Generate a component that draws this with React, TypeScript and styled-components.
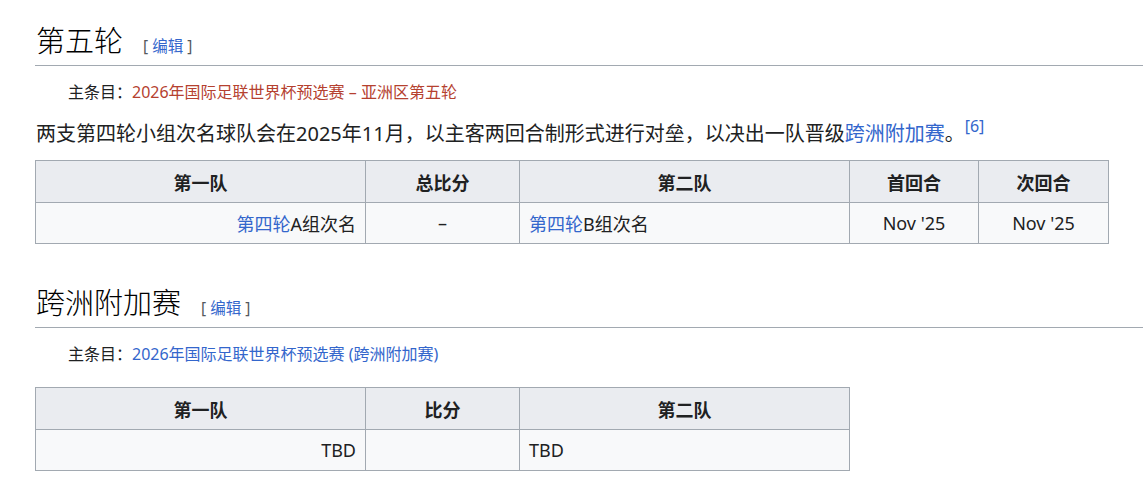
import React from "react";
import styled, { createGlobalStyle } from "styled-components";

const GlobalStyle = createGlobalStyle`
  body {
    margin: 0;
    background: #ffffff;
    color: #202122;
    font-family: "Noto Sans", "Noto Sans CJK SC", sans-serif;
  }
`;

const Page = styled.div`
  padding: 20px 0 0 35px;
`;

const Section = styled.section<{ $gap?: number }>`
  margin-top: ${(p) => p.$gap ?? 0}px;
`;

const Heading = styled.h2`
  display: block;
  margin: 0;
  padding: 0 0 7px 1px;
  border-bottom: 1px solid #a2a9b1;
  font-family: "Noto Sans CJK SC", sans-serif;
  font-weight: 300;
  font-size: 29px;
  line-height: 38px;
  color: #000000;
`;

const EditLinks = styled.span`
  margin-left: 20px;
  font-size: 15.5px;
  line-height: 1;
  font-weight: 400;
  color: #54595d;
  font-family: "Noto Sans", "Noto Sans CJK SC", sans-serif;
`;

const Link = styled.a<{ $red?: boolean }>`
  color: ${(p) => (p.$red ? "#b5412f" : "#3366cc")};
  text-decoration: none;
`;

const Hatnote = styled.div`
  margin-top: 14px;
  padding-left: 33px;
  font-size: 16px;
  line-height: 24px;
`;

const Paragraph = styled.p`
  margin: 14px 0 0 1px;
  font-size: 20px;
  line-height: 32px;
`;

const Ref = styled.sup`
  font-size: 16px;
  line-height: 1;
  margin-left: 0;
  vertical-align: 9px;
`;

const Table = styled.table<{ $top: number }>`
  margin-top: ${(p) => p.$top}px;
  border-collapse: collapse;
  border: 1px solid #a2a9b1;
  font-family: "Noto Sans", "Noto Sans CJK SC", sans-serif;
  font-size: 18px;
  table-layout: fixed;
`;

const Th = styled.th<{ $w: number }>`
  width: ${(p) => p.$w}px;
  height: 42px;
  padding: 0 9px;
  box-sizing: border-box;
  background: #eaecf0;
  border: 1px solid #a2a9b1;
  font-weight: 700;
  text-align: center;
`;

const Td = styled.td<{ $align?: "left" | "right" | "center" }>`
  height: 41px;
  padding: 0 9px;
  box-sizing: border-box;
  background: #f8f9fa;
  border: 1px solid #a2a9b1;
  text-align: ${(p) => p.$align ?? "center"};
`;

export default function App() {
  return (
    <Page>
      <GlobalStyle />
      <Section>
        <Heading>
          第五轮
          <EditLinks>
            [ <Link href="#">编辑</Link> ]
          </EditLinks>
        </Heading>
        <Hatnote>
          主条目：<Link $red href="#">2026年国际足联世界杯预选赛 – 亚洲区第五轮</Link>
        </Hatnote>
        <Paragraph>
          两支第四轮小组次名球队会在2025年11月，以主客两回合制形式进行对垒，以决出一队晋级
          <Link href="#">跨洲附加赛</Link>。
          <Ref>
            <Link href="#">[6]</Link>
          </Ref>
        </Paragraph>
        <Table $top={10}>
          <thead>
            <tr>
              <Th $w={330}>第一队</Th>
              <Th $w={154}>总比分</Th>
              <Th $w={330}>第二队</Th>
              <Th $w={129}>首回合</Th>
              <Th $w={130}>次回合</Th>
            </tr>
          </thead>
          <tbody>
            <tr>
              <Td $align="right">
                <Link href="#">第四轮</Link>A组次名
              </Td>
              <Td>–</Td>
              <Td $align="left">
                <Link href="#">第四轮</Link>B组次名
              </Td>
              <Td>Nov '25</Td>
              <Td>Nov '25</Td>
            </tr>
          </tbody>
        </Table>
      </Section>
      <Section $gap={38}>
        <Heading>
          跨洲附加赛
          <EditLinks>
            [ <Link href="#">编辑</Link> ]
          </EditLinks>
        </Heading>
        <Hatnote>
          主条目：<Link href="#">2026年国际足联世界杯预选赛 (跨洲附加赛)</Link>
        </Hatnote>
        <Table $top={21}>
          <thead>
            <tr>
              <Th $w={330}>第一队</Th>
              <Th $w={154}>比分</Th>
              <Th $w={330}>第二队</Th>
            </tr>
          </thead>
          <tbody>
            <tr>
              <Td $align="right">TBD</Td>
              <Td />
              <Td $align="left">TBD</Td>
            </tr>
          </tbody>
        </Table>
      </Section>
    </Page>
  );
}
